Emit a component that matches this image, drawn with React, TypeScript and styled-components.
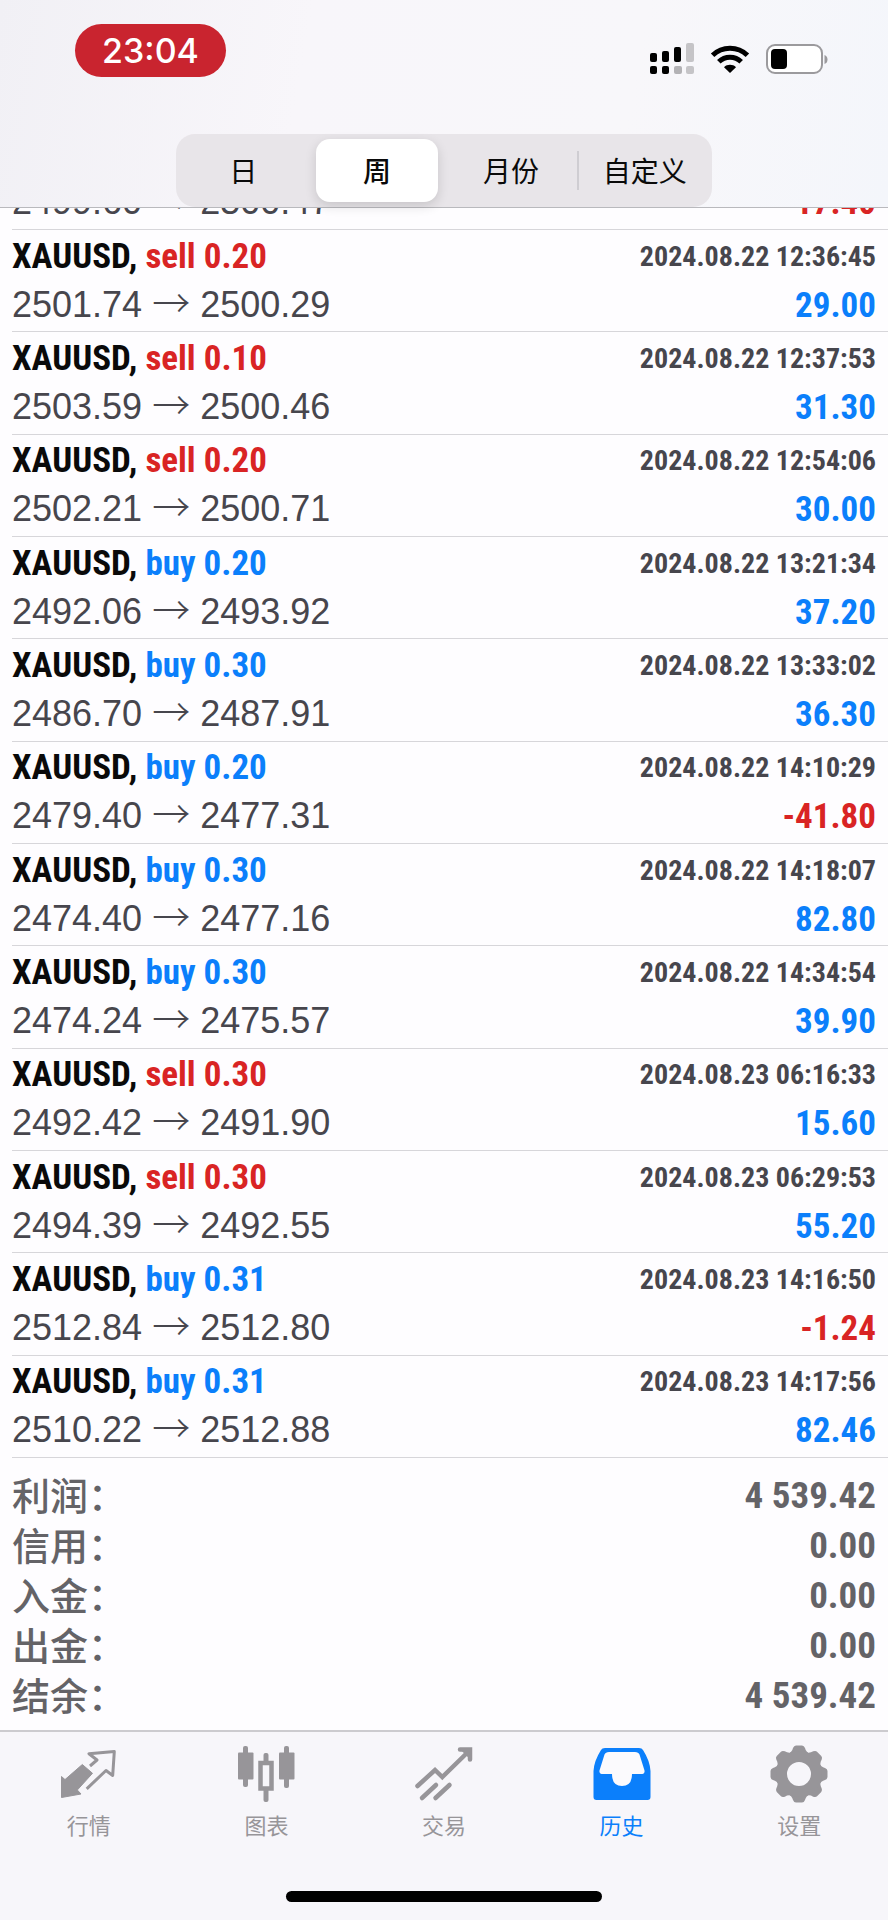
import React from "react";
import styled, { createGlobalStyle } from "styled-components";

const cjk = `"Noto Sans CJK SC", sans-serif`;
const condensed = `"Roboto Condensed", "Liberation Sans", ${cjk}`;
const blue = "#0b7ffb";
const red = "#d92424";

const GlobalStyle = createGlobalStyle`
  *, *::before, *::after { box-sizing: border-box; }
  body { margin: 0; background: #fefdff; font-family: "Liberation Sans", ${cjk}; }
`;

const Page = styled.div`
  display: flex;
  flex-direction: column;
  min-height: 100vh;
`;

const Header = styled.header`
  display: flex;
  flex-direction: column;
  border-bottom: 1px solid #b9b9bd;
  background: linear-gradient(100deg, #f1f0f5 0%, #f8f6fa 34%, #f8f7fa 70%, #f4f6fb 100%);
`;

const StatusBar = styled.div`
  display: flex;
  align-items: center;
  justify-content: space-between;
  height: 134px;
  padding: 24px 60px 57px 75px;
`;

const Clock = styled.time`
  display: flex;
  align-items: center;
  justify-content: center;
  width: 151px;
  height: 53px;
  border-radius: 27px;
  background: #c9242f;
  color: #fff;
  font: 500 34px/40px Inter, sans-serif;
`;

const StatusIcons = styled.div`
  display: flex;
  align-items: center;
  gap: 16px;
  padding-top: 16px;
`;

const Segments = styled.div`
  display: flex;
  align-self: center;
  width: 60.3%;
  height: 73px;
  padding: 5px 0;
  border-radius: 19px;
  background: #e8e5e9;
`;

const Segment = styled.button<{ $active?: boolean; $divided?: boolean }>`
  position: relative;
  flex: 1;
  margin: 0 6px;
  padding: 0 0 2px;
  border: 0;
  border-radius: 14px;
  background: ${(p) => (p.$active ? "#fff" : "transparent")};
  box-shadow: ${(p) => (p.$active ? "0 4px 12px rgba(0, 0, 0, 0.14)" : "none")};
  color: #0a0a0a;
  font: ${(p) => (p.$active ? 500 : 400)} 28px/40px ${cjk};
  white-space: nowrap;

  &::before {
    content: "";
    display: ${(p) => (p.$divided ? "block" : "none")};
    position: absolute;
    left: -7px;
    top: 12px;
    bottom: 12px;
    width: 2px;
    background: #cfcdd2;
  }
`;

const History = styled.ul`
  display: flex;
  flex: 1;
  flex-direction: column;
  margin: 0;
  padding: 0 0 0 12px;
  list-style: none;
`;

const Trade = styled.li<{ $clipped?: boolean }>`
  display: flex;
  flex: ${(p) => (p.$clipped ? "0 0 22px" : "1 0 96px")};
  flex-direction: column;
  justify-content: ${(p) => (p.$clipped ? "flex-end" : "center")};
  overflow: hidden;
  padding-right: 12px;
  padding-bottom: ${(p) => (p.$clipped ? "9px" : "4px")};
  border-bottom: 1px solid #d7d6da;
`;

const Line = styled.div<{ $baseline?: boolean }>`
  display: flex;
  flex: none;
  align-items: ${(p) => (p.$baseline ? "baseline" : "center")};
  justify-content: space-between;
  height: 44px;
`;

const Symbol = styled.span`
  color: #0a0a0a;
  font: 700 35px/44px ${condensed};
`;

const Side = styled.span<{ $side: string }>`
  color: ${(p) => (p.$side === "buy" ? blue : red)};
`;

const Time = styled.time`
  color: #47464d;
  font: 700 28px/44px ${condensed};
`;

const Prices = styled.span`
  color: #47464d;
  font: 400 36px/44px "Liberation Sans", sans-serif;
`;

const Arrow = styled.span`
  font: 300 38px/44px ${cjk};
`;

const Profit = styled.span<{ $loss: boolean }>`
  color: ${(p) => (p.$loss ? red : blue)};
  font: 700 35px/44px ${condensed};
`;

const Totals = styled.dl`
  display: flex;
  flex-direction: column;
  margin: 0;
  padding: 11px 12px;
  color: #646367;
`;

const Total = styled.div`
  display: flex;
  justify-content: space-between;
  height: 50px;
`;

const TotalLabel = styled.dt`
  font: 500 38px/50px ${cjk};
`;

const TotalValue = styled.dd`
  margin: 0;
  font: 700 37px/54px ${condensed};
`;

const Footer = styled.footer`
  display: flex;
  flex-direction: column;
  align-items: center;
  gap: 44px;
  padding-bottom: 18px;
  border-top: 2px solid #cccbcf;
  background: #f7f6fa;
`;

const TabBar = styled.nav`
  display: flex;
  width: 100%;
  height: 115px;
`;

const Tab = styled.a<{ $active?: boolean }>`
  display: flex;
  flex: 1;
  flex-direction: column;
  align-items: center;
  gap: 6px;
  padding-top: 12px;
  color: ${(p) => (p.$active ? blue : "#979599")};
  font: 400 22px/32px ${cjk};
  text-decoration: none;
`;

const HomeIndicator = styled.div`
  width: 316px;
  height: 11px;
  border-radius: 6px;
  background: #000;
`;

type Row = [side: string, lots: string, open: string, close: string, time: string, profit: string];

const trades: Row[] = [
  ["sell", "0.20", "2501.74", "2500.29", "2024.08.22 12:36:45", "29.00"],
  ["sell", "0.10", "2503.59", "2500.46", "2024.08.22 12:37:53", "31.30"],
  ["sell", "0.20", "2502.21", "2500.71", "2024.08.22 12:54:06", "30.00"],
  ["buy", "0.20", "2492.06", "2493.92", "2024.08.22 13:21:34", "37.20"],
  ["buy", "0.30", "2486.70", "2487.91", "2024.08.22 13:33:02", "36.30"],
  ["buy", "0.20", "2479.40", "2477.31", "2024.08.22 14:10:29", "-41.80"],
  ["buy", "0.30", "2474.40", "2477.16", "2024.08.22 14:18:07", "82.80"],
  ["buy", "0.30", "2474.24", "2475.57", "2024.08.22 14:34:54", "39.90"],
  ["sell", "0.30", "2492.42", "2491.90", "2024.08.23 06:16:33", "15.60"],
  ["sell", "0.30", "2494.39", "2492.55", "2024.08.23 06:29:53", "55.20"],
  ["buy", "0.31", "2512.84", "2512.80", "2024.08.23 14:16:50", "-1.24"],
  ["buy", "0.31", "2510.22", "2512.88", "2024.08.23 14:17:56", "82.46"],
];

const totals = [
  ["利润：", "4 539.42"],
  ["信用：", "0.00"],
  ["入金：", "0.00"],
  ["出金：", "0.00"],
  ["结余：", "4 539.42"],
];

const Signal = () => (
  <svg width="44" height="32" viewBox="0 0 44 32" aria-label="信号">
    <rect x="0" y="10" width="7" height="9" rx="2" />
    <rect x="12" y="8" width="7" height="11" rx="2" />
    <rect x="24" y="4" width="7" height="15" rx="2" />
    <rect x="36" y="0" width="8" height="19" rx="2" fill="#c5c4c7" />
    <rect x="0" y="23" width="7" height="8" rx="2" />
    <rect x="12" y="23" width="7" height="8" rx="2" />
    <rect x="24" y="23" width="8" height="8" rx="2" fill="#b3b2b5" />
    <rect x="36" y="23" width="8" height="8" rx="2" fill="#c5c4c7" />
  </svg>
);

const Wifi = () => (
  <svg width="40" height="28" viewBox="0 0 40 28" fill="none" stroke="#000" strokeWidth="5" aria-label="无线网络">
    <path d="M2.600 10.200a25 25 0 0 1 34.800 0" />
    <path d="M8.800 16.700a16 16 0 0 1 22.400 0" />
    <path d="M20 28l-6-5.800c3.200-3.200 8.800-3.200 12 0z" fill="#000" stroke="none" />
  </svg>
);

const Battery = () => (
  <svg width="62" height="30" viewBox="0 0 62 30" aria-label="电池">
    <rect x="1" y="1" width="55" height="28" rx="8" fill="#fff" stroke="#9b9a9d" strokeWidth="2" />
    <rect x="5" y="5" width="16" height="20" rx="4" />
    <path d="M58.500 11q3 1 3 4.500t-3 4.500z" fill="#9b9a9d" />
  </svg>
);

const QuotesIcon = () => (
  <svg width="58" height="58" viewBox="0 0 58 58" strokeLinejoin="round" aria-hidden="true">
    <path d="M1.500 32.500L5 35.600 22.300 20.500 32.500 29.300 17.300 46 21 50 1.500 53.500z" fill="currentColor" stroke="currentColor" />
    <path d="M30 22L37 16 29 9.700 54.300 7.600 52.700 31.500 46 26.500 26.700 44.800" fill="none" stroke="currentColor" strokeWidth="3" />
  </svg>
);

const ChartIcon = () => (
  <svg width="58" height="58" viewBox="0 0 58 58" fill="currentColor" aria-hidden="true">
    <rect x="6" y="2" width="5" height="41" rx="2" />
    <rect x="1" y="8.500" width="15.500" height="27" rx="1" />
    <rect x="26.500" y="9" width="5" height="12" rx="2" />
    <rect x="23.500" y="19" width="11" height="25.500" fill="none" stroke="currentColor" strokeWidth="4.500" />
    <rect x="26.500" y="44" width="5" height="14" rx="2" />
    <rect x="47" y="2" width="5" height="42" rx="2" />
    <rect x="42" y="8.500" width="15.500" height="27" rx="1" />
  </svg>
);

const TradeIcon = () => (
  <svg width="58" height="58" viewBox="0 0 58 58" fill="none" stroke="currentColor" strokeWidth="4.500" strokeLinecap="round" aria-hidden="true">
    <path d="M2.500 42L20 26l7.300 7L54 7M45 5.500h10v10" />
    <path d="M50 7h4v4z" />
    <path d="M7 54l14-13M20.500 54l14-13" />
  </svg>
);

const HistoryIcon = () => (
  <svg width="58" height="58" viewBox="0 0 58 58" aria-hidden="true">
    <path d="M12 4h34q3 0 4 2 7 11 7.500 21v26q0 3-3 3h-51q-3 0-3-3V27Q1 17 8 6q1-2 4-2z" fill="currentColor" />
    <path d="M16 8h26q3.500 0 4.500 2.500l5 16q.5 3.500-2 3.500H39q0 12-10 12T19 30H8.500q-2.500 0-2-3.500l5-16Q12.500 8 16 8z" fill="#fbfafd" />
  </svg>
);

const teeth = [0, 45, 90, 135, 180, 225, 270, 315];

const SettingsIcon = () => (
  <svg width="58" height="58" viewBox="-29 -30 58 58" overflow="visible" aria-hidden="true">
    {teeth.map((angle) => (
      <path key={angle} d="M-11-20Q-7-22-6-26-5-28.500-3-28.500H3Q5-28.500 6-26 7-22 11-20z" fill="currentColor" transform={`rotate(${angle})`} />
    ))}
    <circle r="17.500" fill="none" stroke="currentColor" strokeWidth="11" />
  </svg>
);

const tabs = [
  { label: "行情", Icon: QuotesIcon },
  { label: "图表", Icon: ChartIcon },
  { label: "交易", Icon: TradeIcon },
  { label: "历史", Icon: HistoryIcon, active: true },
  { label: "设置", Icon: SettingsIcon },
];

const PriceLine = ({ open, close, profit }: { open: string; close: string; profit: string }) => (
  <Line $baseline>
    <Prices>
      {open} <Arrow>→</Arrow> {close}
    </Prices>
    <Profit $loss={profit.startsWith("-")}>{profit}</Profit>
  </Line>
);

export default function App() {
  return (
    <Page>
      <GlobalStyle />
      <Header>
        <StatusBar>
          <Clock>23:04</Clock>
          <StatusIcons>
            <Signal />
            <Wifi />
            <Battery />
          </StatusIcons>
        </StatusBar>
        <Segments>
          <Segment>日</Segment>
          <Segment $active>周</Segment>
          <Segment>月份</Segment>
          <Segment $divided>自定义</Segment>
        </Segments>
      </Header>
      <History>
        <Trade $clipped>
          <PriceLine open="2499.60" close="2500.47" profit="-17.40" />
        </Trade>
        {trades.map(([side, lots, open, close, time, profit]) => (
          <Trade key={time}>
            <Line>
              <Symbol>
                XAUUSD, <Side $side={side}>{side} {lots}</Side>
              </Symbol>
              <Time>{time}</Time>
            </Line>
            <PriceLine open={open} close={close} profit={profit} />
          </Trade>
        ))}
      </History>
      <Totals>
        {totals.map(([label, value]) => (
          <Total key={label}>
            <TotalLabel>{label}</TotalLabel>
            <TotalValue>{value}</TotalValue>
          </Total>
        ))}
      </Totals>
      <Footer>
        <TabBar>
          {tabs.map(({ label, Icon, active }) => (
            <Tab key={label} href="#" $active={active}>
              <Icon />
              {label}
            </Tab>
          ))}
        </TabBar>
        <HomeIndicator />
      </Footer>
    </Page>
  );
}
